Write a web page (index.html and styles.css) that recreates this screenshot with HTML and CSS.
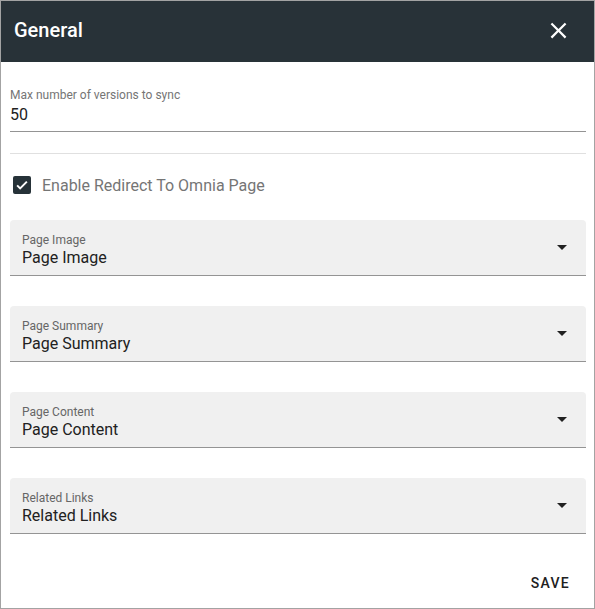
FILE: index.html
```html
<!DOCTYPE html>
<html>
<head>
<meta charset="utf-8">
<link rel="stylesheet" href="styles.css">
</head>
<body>
<div class="dialog">
  <header class="header">
    <h1 class="title">General</h1>
    <button class="close" aria-label="Close">
      <svg viewBox="0 0 24 24" width="27" height="27"><path fill="#fff" d="M19,6.41L17.59,5L12,10.59L6.41,5L5,6.41L10.59,12L5,17.59L6.41,19L12,13.41L17.59,19L19,17.59L13.41,12L19,6.41Z"/></svg>
    </button>
  </header>
  <main class="content">
    <div class="text-field">
      <div class="field-label">Max number of versions to sync</div>
      <div class="field-value">50</div>
    </div>
    <hr class="divider">
    <label class="checkbox-row">
      <span class="checkbox">
        <svg viewBox="0 0 24 24" width="18" height="18"><path fill="none" stroke="#fff" stroke-width="2.6" d="M5.5 12.5l4 4 9-9"/></svg>
      </span>
      <span class="checkbox-label">Enable Redirect To Omnia Page</span>
    </label>
    <div class="selects">
      <div class="select">
        <div class="select-text">
          <div class="select-label">Page Image</div>
          <div class="select-value">Page Image</div>
        </div>
        <span class="arrow"></span>
      </div>
      <div class="select">
        <div class="select-text">
          <div class="select-label">Page Summary</div>
          <div class="select-value">Page Summary</div>
        </div>
        <span class="arrow"></span>
      </div>
      <div class="select">
        <div class="select-text">
          <div class="select-label">Page Content</div>
          <div class="select-value">Page Content</div>
        </div>
        <span class="arrow"></span>
      </div>
      <div class="select">
        <div class="select-text">
          <div class="select-label">Related Links</div>
          <div class="select-value">Related Links</div>
        </div>
        <span class="arrow"></span>
      </div>
    </div>
  </main>
  <footer class="actions">
    <button class="save">SAVE</button>
  </footer>
</div>
</body>
</html>
```

FILE: styles.css
```css
* { box-sizing: border-box; }
html, body { margin: 0; padding: 0; background: #fff; }
body { font-family: Roboto, "Noto Sans", Arial, sans-serif; color: #212121; }

.dialog {
  width: 595px;
  height: 609px;
  border: 1px solid #a3a3a3;
  display: flex;
  flex-direction: column;
  background: #fff;
}

.header {
  height: 61px;
  flex: none;
  background: #283238;
  display: flex;
  align-items: center;
  justify-content: space-between;
  padding: 0 13px 3px 13px;
}
.title {
  margin: 0;
  font-size: 20px;
  font-weight: 500;
  color: #fff;
  letter-spacing: 0;
}
.close {
  border: 0;
  background: none;
  padding: 0;
  width: 27px;
  height: 27px;
  margin-right: 9px;
  display: flex;
  cursor: pointer;
}

.content {
  flex: 1;
  padding: 25px 8px 0 9px;
}

.text-field {
  border-bottom: 1px solid #949494;
  padding-bottom: 4px;
}
.field-label {
  font-size: 12px;
  line-height: 16px;
  color: #757575;
}
.field-value {
  font-size: 16px;
  line-height: 24px;
  color: #212121;
}

.divider {
  border: 0;
  border-top: 1px solid #e0e0e0;
  margin: 21px 0 0 0;
}

.checkbox-row {
  display: flex;
  align-items: center;
  margin-top: 21px;
  padding-left: 3px;
  height: 20px;
}
.checkbox {
  width: 18px;
  height: 18px;
  background: #263238;
  border-radius: 2px;
  display: flex;
}
.checkbox-label {
  margin-left: 11px;
  font-size: 16px;
  color: #757575;
}

.selects {
  margin-top: 25px;
  display: flex;
  flex-direction: column;
  gap: 30px;
}
.select {
  height: 56px;
  background: #f0f0f0;
  border-radius: 4px 4px 0 0;
  border-bottom: 1px solid #949494;
  display: flex;
  align-items: center;
  padding: 0 19px 0 12px;
}
.select-text { flex: 1; padding-top: 6px; }
.select-label {
  font-size: 12px;
  line-height: 14px;
  color: #666;
}
.select-value {
  font-size: 16px;
  line-height: 22px;
  color: #212121;
}
.arrow {
  width: 0;
  height: 0;
  border-left: 5px solid transparent;
  border-right: 5px solid transparent;
  border-top: 5px solid #212121;
}

.actions {
  flex: none;
  display: flex;
  justify-content: flex-end;
  padding: 0 8px 7px 0;
}
.save {
  border: 0;
  background: none;
  font-family: Roboto, "Noto Sans", Arial, sans-serif;
  font-size: 14px;
  font-weight: 500;
  letter-spacing: 1.25px;
  color: #212121;
  height: 36px;
  padding: 0 16px;
}
```
